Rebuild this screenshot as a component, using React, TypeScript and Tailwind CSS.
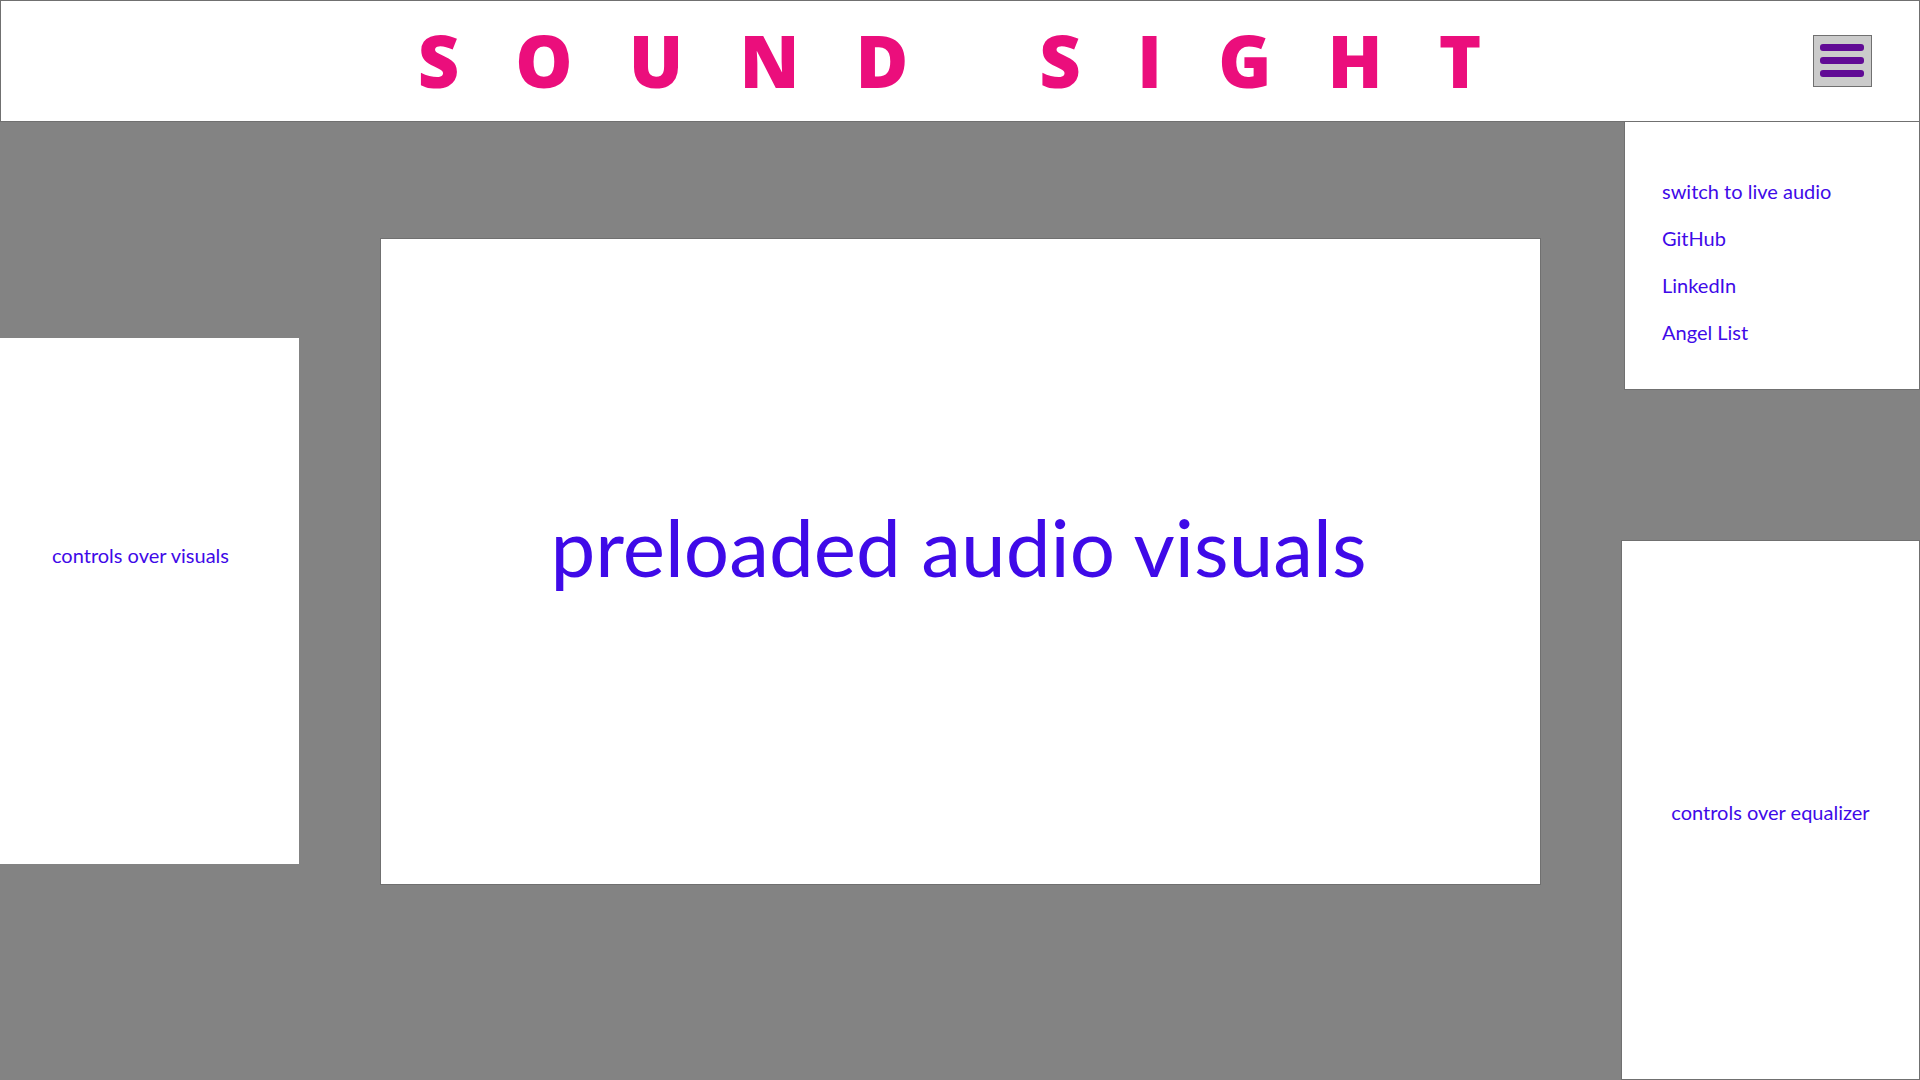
const links = ['switch to live audio', 'GitHub', 'LinkedIn', 'Angel List']

function Header() {
  return (
    <header className="grid h-[122px] grid-cols-[1fr_auto_1fr] items-center border border-[#707070] bg-white pl-[26px] pr-[47px]">
      <h1 className="col-start-2 whitespace-pre pb-[2px] font-['Open_Sans',sans-serif] text-[72px] leading-none font-extrabold text-[#eb0e7c]">
        {'S   O   U   N   D       S   I   G   H   T'}
      </h1>
      <button
        type="button"
        aria-label="Menu"
        aria-expanded="true"
        className="flex h-[52px] w-[59px] flex-col gap-[6px] justify-self-end border border-[#707070] bg-[#cbcbcb] pt-[8px] pl-[6px]"
      >
        <span className="h-[7px] w-[44px] rounded-[3px] bg-[#610b95]" />
        <span className="h-[7px] w-[44px] rounded-[3px] bg-[#610b95]" />
        <span className="h-[7px] w-[44px] rounded-[3px] bg-[#610b95]" />
      </button>
    </header>
  )
}

export default function App() {
  return (
    <div className="flex min-h-screen flex-col bg-[#838383] font-[Lato,sans-serif] text-[20px] leading-[24px] text-[#3f0ae8]">
      <Header />
      <div className="flex flex-1">
        <aside className="mt-[216px] mb-[216px] flex w-[299px] shrink-0 items-center justify-center bg-white pr-[18px] pb-[92px]">
          <p>controls over visuals</p>
        </aside>
        <main className="mt-[116px] mr-[80px] mb-[195px] ml-[81px] flex flex-1 items-center justify-center border border-[#707070] bg-white pr-[4px] pb-[32px]">
          <p className="text-[80px] leading-[96px]">preloaded audio visuals</p>
        </main>
        <div className="flex w-[299px] shrink-0 flex-col">
          <nav className="ml-[3px] h-[268px] border border-t-0 border-[#707070] bg-white pt-[46px] pl-[37px]">
            <ul>
              {links.map((link) => (
                <li key={link} className="leading-[47px]">
                  <a href="#">{link}</a>
                </li>
              ))}
            </ul>
          </nav>
          <aside className="mt-[150px] flex flex-1 items-center justify-center border border-[#707070] bg-white pt-[4px]">
            <p>controls over equalizer</p>
          </aside>
        </div>
      </div>
    </div>
  )
}
